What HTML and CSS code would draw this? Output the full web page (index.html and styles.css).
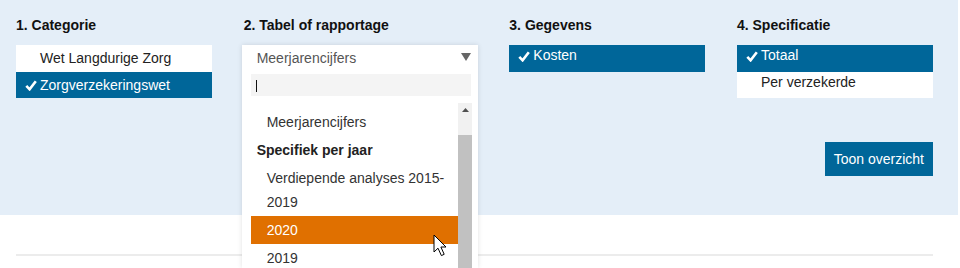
FILE: index.html
```html
<!DOCTYPE html>
<html lang="nl">
<head>
<meta charset="utf-8">
<title>Zorginstituut selectie</title>
<link rel="stylesheet" href="styles.css">
</head>
<body>
<section class="filters">
  <div class="columns">
    <div class="col">
      <h3 class="col-title">1. Categorie</h3>
      <ul class="choice">
        <li class="item">Wet Langdurige Zorg</li>
        <li class="item selected"><svg class="check" viewBox="0 0 12 11"><polyline points="1.3,5.8 4.6,9.3 10.8,1.2"/></svg>Zorgverzekeringswet</li>
      </ul>
    </div>
    <div class="col">
      <h3 class="col-title">2. Tabel of rapportage</h3>
      <div class="select-holder">
        <div class="dropdown">
          <div class="select-current">
            <span>Meerjarencijfers</span>
            <svg class="caret" viewBox="0 0 10 8"><polygon points="0,0 10,0 5,8"/></svg>
          </div>
          <div class="search"><span class="text-caret"></span></div>
          <div class="results">
            <ul class="options">
              <li class="opt">Meerjarencijfers</li>
              <li class="group">Specifiek per jaar</li>
              <li class="opt">Verdiepende analyses 2015-2019</li>
              <li class="opt hl">2020</li>
              <li class="opt">2019</li>
            </ul>
            <div class="scrollbar">
              <svg class="scroll-up" viewBox="0 0 7 4"><polygon points="0,4 7,4 3.5,0"/></svg>
              <div class="thumb"></div>
            </div>
          </div>
          <svg class="pointer" viewBox="0 0 14 23"><path d="M1 1 L1 18 L5 14.2 L8.4 21.6 L11.2 20.3 L7.9 13 L13 13 Z"/></svg>
        </div>
      </div>
    </div>
    <div class="col">
      <h3 class="col-title">3. Gegevens</h3>
      <ul class="choice raised">
        <li class="item selected"><svg class="check" viewBox="0 0 12 11"><polyline points="1.3,5.8 4.6,9.3 10.8,1.2"/></svg>Kosten</li>
      </ul>
    </div>
    <div class="col">
      <h3 class="col-title">4. Specificatie</h3>
      <ul class="choice raised">
        <li class="item selected"><svg class="check" viewBox="0 0 12 11"><polyline points="1.3,5.8 4.6,9.3 10.8,1.2"/></svg>Totaal</li>
        <li class="item">Per verzekerde</li>
      </ul>
    </div>
  </div>
  <div class="actions">
    <button class="btn">Toon overzicht</button>
  </div>
</section>
<section class="below">
  <hr class="divider">
</section>
</body>
</html>
```
FILE: styles.css
```css
html, body {
  margin: 0;
  padding: 0;
  height: 268px;
  overflow: hidden;
  background: #ffffff;
  font-family: "Liberation Sans", Arial, sans-serif;
  font-size: 14px;
  color: #222;
}

.filters {
  background: #e4eef8;
  margin-right: 2px;
  padding: 16px 25px 39px 16px;
  height: 160px;
  box-sizing: content-box;
}

.columns {
  display: grid;
  grid-template-columns: 196px 234px 196px 196px;
  justify-content: space-between;
  width: 917px;
}

.col-title {
  margin: 0 0 11px;
  font-size: 14px;
  line-height: 18px;
  font-weight: bold;
  color: #111;
}

.choice {
  list-style: none;
  margin: 0;
  padding: 0;
  background: #fff;
}

.item {
  position: relative;
  padding: 4px 8px 4px 24px;
  line-height: 18.5px;
  color: #222;
}

.raised .item {
  padding: 1px 8px 7px 24px;
}

.item.selected {
  background: #006699;
  color: #fff;
}

.check {
  position: absolute;
  left: 9px;
  top: 8px;
  width: 12px;
  height: 11px;
  fill: none;
  stroke: #fff;
  stroke-width: 2.6;
}

.raised .check {
  top: 6px;
}

.select-holder {
  position: relative;
  height: 53px;
}

.dropdown {
  position: absolute;
  z-index: 5;
  left: -2px;
  top: 0;
  width: 236px;
  height: 223px;
  overflow: hidden;
  background: #fff;
  box-shadow: 0 0 5px rgba(0, 0, 0, 0.12);
}

.select-current {
  display: flex;
  align-items: center;
  justify-content: space-between;
  height: 25px;
  padding: 0 7px 0 15px;
  color: #555;
}

.caret {
  width: 10px;
  height: 8px;
  fill: #666;
  margin-top: -1px;
}

.search {
  margin: 4px 7px 0 9px;
  height: 22px;
  background: #f4f4f4;
  position: relative;
}

.text-caret {
  position: absolute;
  left: 5px;
  top: 6px;
  width: 1px;
  height: 12px;
  background: #111;
}

.results {
  position: relative;
  margin: 7px 6px 0 9px;
  padding-right: 14px;
}

.options {
  list-style: none;
  margin: 0;
  padding: 5px 0 0;
}

.opt {
  padding: 2px 8px 2px 16px;
  line-height: 24px;
  color: #333;
}

.opt.hl {
  background: #e07000;
  color: #fff;
}

.group {
  padding: 2px 8px 2px 6px;
  line-height: 24px;
  font-weight: bold;
  color: #222;
}

.scrollbar {
  position: absolute;
  right: 0;
  top: 0;
  width: 14px;
  height: 170px;
  background: #f1f1f1;
}

.scroll-up {
  position: absolute;
  left: 4px;
  top: 5px;
  width: 7px;
  height: 4px;
  fill: #505050;
}

.thumb {
  position: absolute;
  left: 0;
  top: 32px;
  width: 14px;
  height: 138px;
  background: #c1c1c1;
}

.pointer {
  position: absolute;
  left: 191px;
  top: 189px;
  width: 14px;
  height: 23px;
  fill: #fff;
  stroke: #000;
  stroke-width: 1;
  stroke-linejoin: round;
}

.actions {
  display: flex;
  justify-content: flex-end;
  margin-top: 44px;
  width: 917px;
}

.btn {
  border: 0;
  margin: 0;
  background: #006699;
  color: #fff;
  font-family: "Liberation Sans", Arial, sans-serif;
  font-size: 14px;
  height: 34px;
  padding: 0 9px;
}

.below {
  padding: 39px 27px 0 16px;
}

.divider {
  margin: 0;
  border: 0;
  border-top: 2px solid #ececec;
  width: 917px;
}
```
